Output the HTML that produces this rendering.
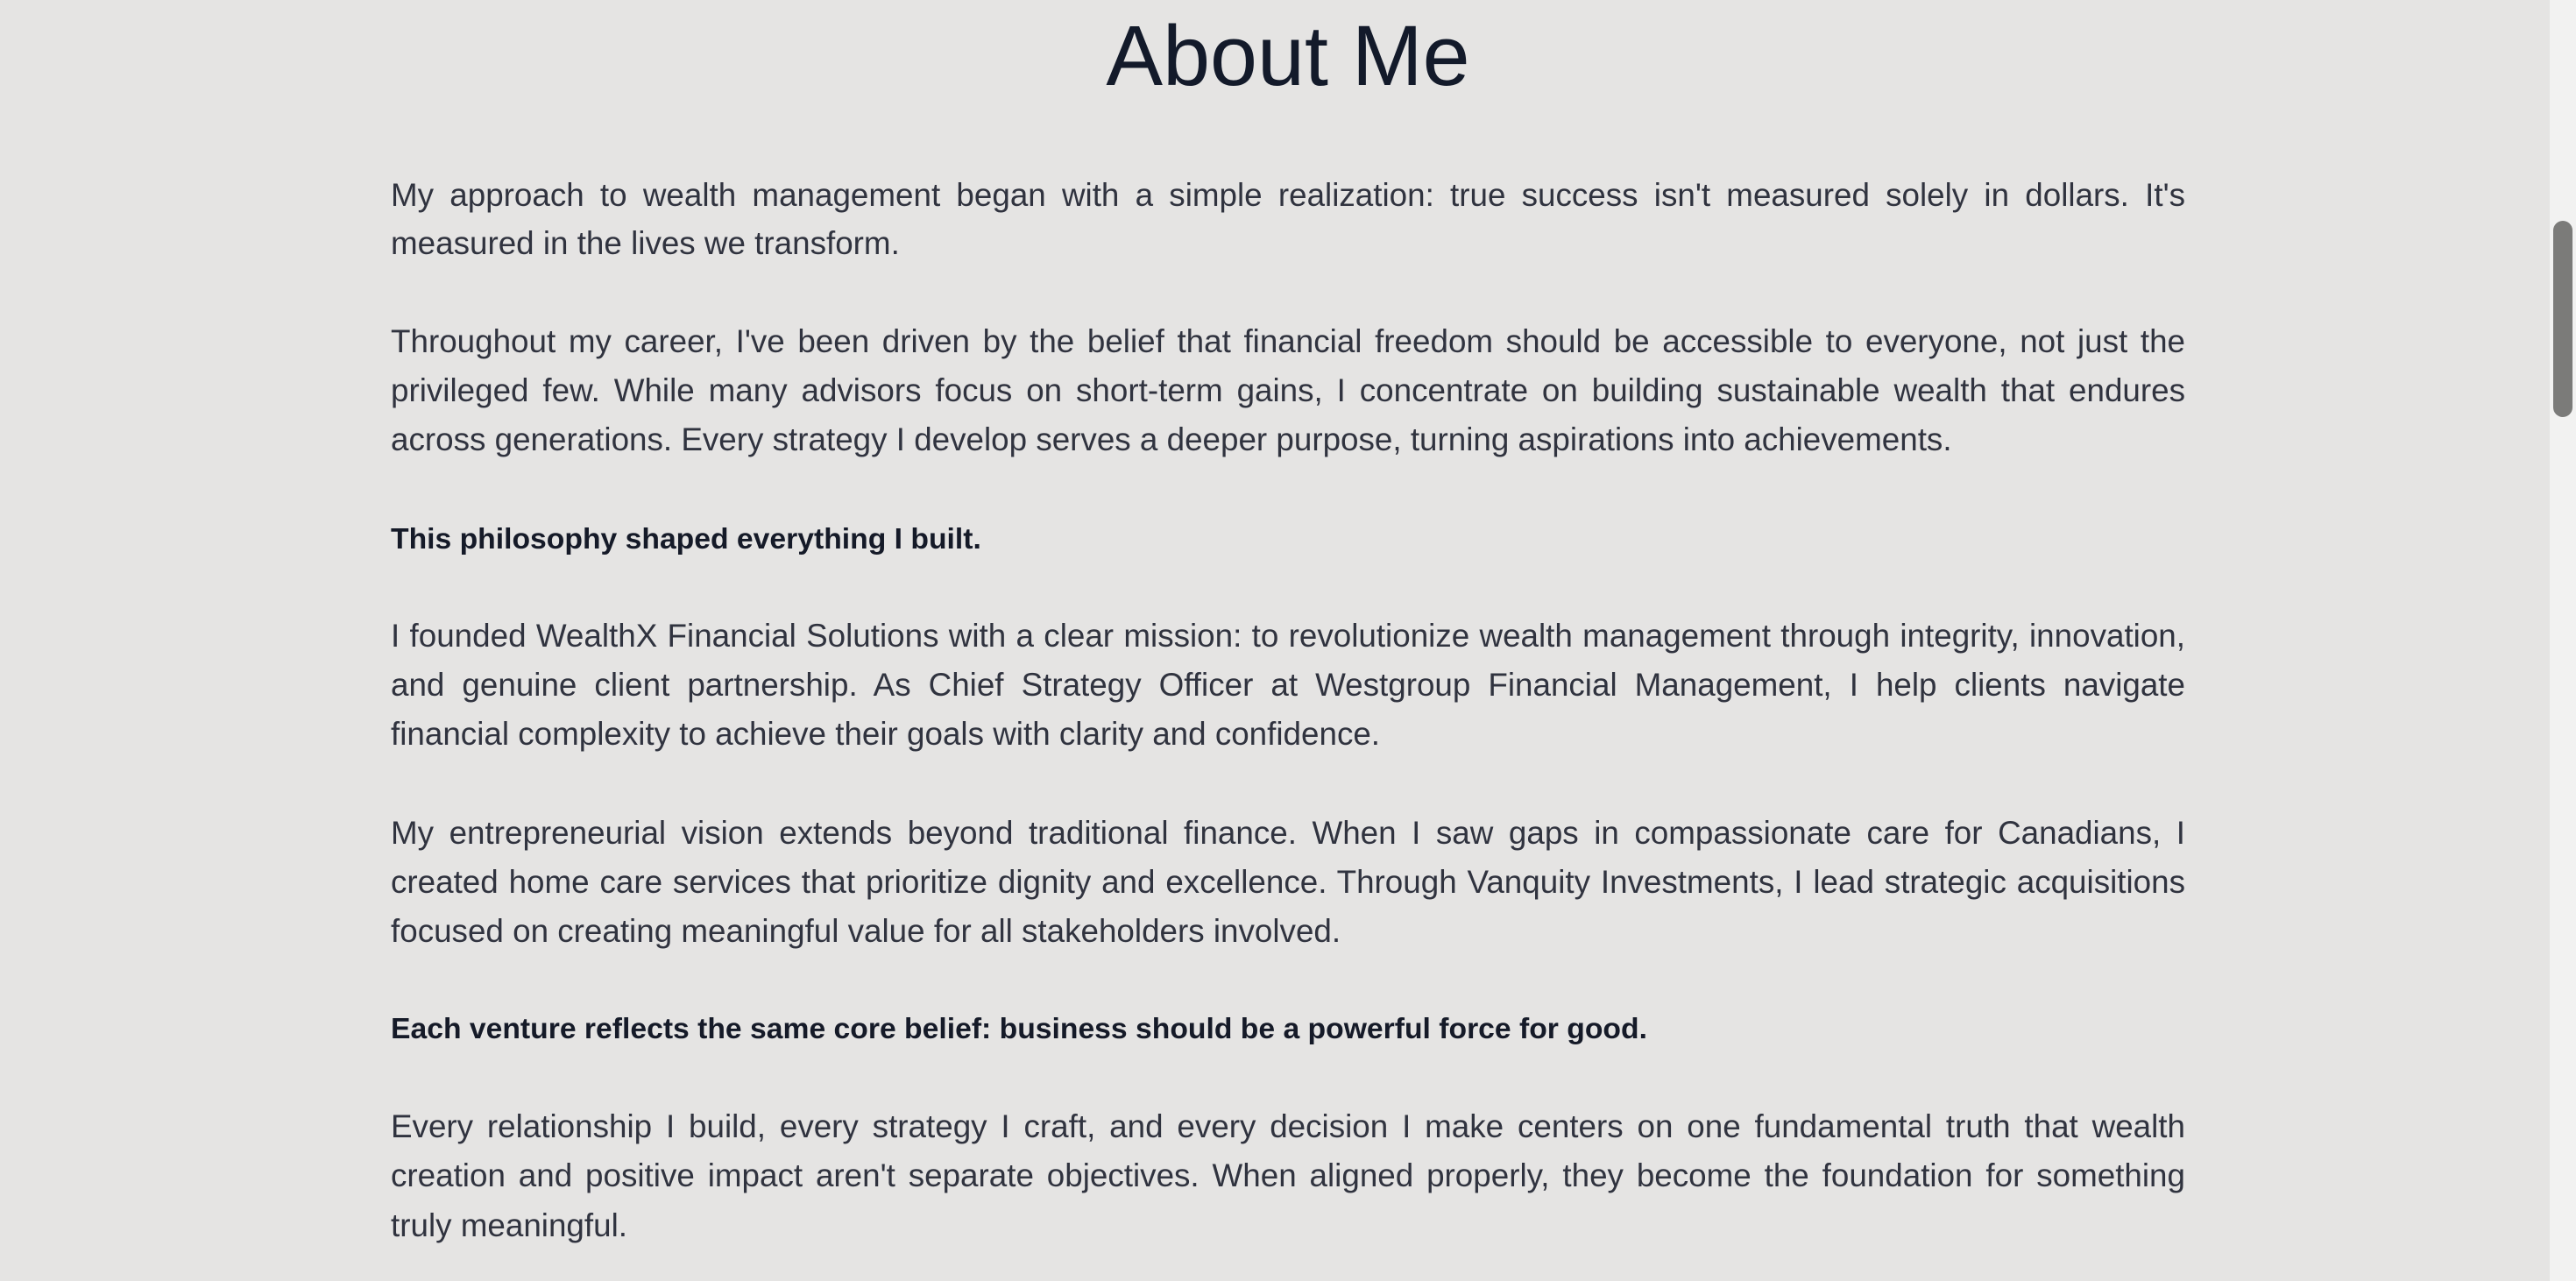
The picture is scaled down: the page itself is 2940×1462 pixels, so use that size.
<!DOCTYPE html>
<html><head><meta charset="utf-8"><style>
html,body{margin:0;padding:0}
body{width:2940px;height:1462px;background:#e5e4e3;position:relative;overflow:hidden;font-family:"Liberation Sans",sans-serif}
h1{position:absolute;left:0;width:2940px;top:4px;margin:0;text-align:center;font-weight:400;font-size:97px;line-height:120px;color:#131a2a}
.l{position:absolute;left:446px;width:2048px;height:56px;line-height:56px;font-size:36.8px;color:#30333f;white-space:nowrap}
.j{text-align:justify;text-align-last:justify}
.b{color:#151a28;font-weight:700;font-size:33.7px}
.track{position:absolute;left:2910px;top:0;width:30px;height:1462px;background:#f2f2f1}
.thumb{position:absolute;left:2914px;top:252px;width:22px;height:224px;border-radius:11px;background:#7b7b79}
</style></head><body>
<h1>About Me</h1>
<div class="l j" style="top:195px">My approach to wealth management began with a simple realization: true success isn't measured solely in dollars. It's</div>
<div class="l" style="top:250px">measured in the lives we transform.</div>
<div class="l j" style="top:362px">Throughout my career, I've been driven by the belief that financial freedom should be accessible to everyone, not just the</div>
<div class="l j" style="top:418px">privileged few. While many advisors focus on short-term gains, I concentrate on building sustainable wealth that endures</div>
<div class="l" style="top:474px">across generations. Every strategy I develop serves a deeper purpose, turning aspirations into achievements.</div>
<div class="l b" style="top:587px">This philosophy shaped everything I built.</div>
<div class="l j" style="top:698px">I founded WealthX Financial Solutions with a clear mission: to revolutionize wealth management through integrity, innovation,</div>
<div class="l j" style="top:754px">and genuine client partnership. As Chief Strategy Officer at Westgroup Financial Management, I help clients navigate</div>
<div class="l" style="top:810px">financial complexity to achieve their goals with clarity and confidence.</div>
<div class="l j" style="top:923px">My entrepreneurial vision extends beyond traditional finance. When I saw gaps in compassionate care for Canadians, I</div>
<div class="l j" style="top:979px">created home care services that prioritize dignity and excellence. Through Vanquity Investments, I lead strategic acquisitions</div>
<div class="l" style="top:1035px">focused on creating meaningful value for all stakeholders involved.</div>
<div class="l b" style="top:1146px">Each venture reflects the same core belief: business should be a powerful force for good.</div>
<div class="l j" style="top:1258px">Every relationship I build, every strategy I craft, and every decision I make centers on one fundamental truth that wealth</div>
<div class="l j" style="top:1314px">creation and positive impact aren't separate objectives. When aligned properly, they become the foundation for something</div>
<div class="l" style="top:1371px">truly meaningful.</div>
<div class="track"></div><div class="thumb"></div>
</body></html>
